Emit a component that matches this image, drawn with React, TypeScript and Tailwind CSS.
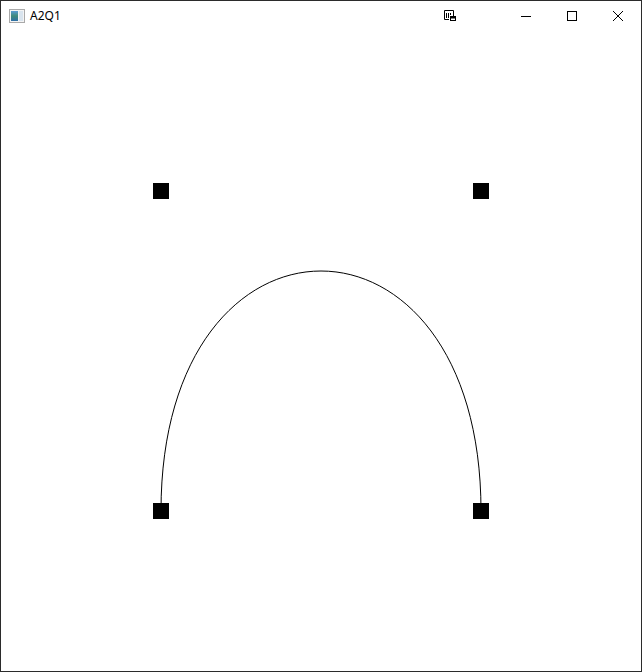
import React from "react";

function AppIcon() {
  return (
    <svg width="16" height="16" viewBox="0 0 16 16" className="shrink-0">
      <defs>
        <linearGradient id="g1" x1="0" y1="0" x2="0" y2="1">
          <stop offset="0" stopColor="#5a9bd4" />
          <stop offset="0.5" stopColor="#3f8a7a" />
          <stop offset="1" stopColor="#2f6fa8" />
        </linearGradient>
      </defs>
      <rect x="0.5" y="1.5" width="15" height="13" fill="#f4f4f4" stroke="#a9a9a9" />
      <rect x="2" y="3" width="7" height="10" fill="url(#g1)" />
      <rect x="10" y="3" width="4" height="10" fill="#d9e4ee" />
    </svg>
  );
}

function SnapIcon() {
  return (
    <svg width="12" height="12" viewBox="0 0 12 12" fill="none" stroke="#000" strokeWidth="1">
      <path d="M9.5 6V0.5H0.5V9.5H5" />
      <path d="M2.5 3V8M4.5 3V8M6.5 3V5" />
      <rect x="6.5" y="6.5" width="5" height="4" fill="#fff" />
      <rect x="7" y="7" width="4" height="1.5" fill="#000" stroke="none" />
    </svg>
  );
}

export default function App() {
  return (
    <div className="w-[642px] h-[672px] bg-white border border-[#2b2b2b] flex flex-col overflow-hidden">
      {/* barra de título */}
      <div className="h-[30px] flex items-center shrink-0">
        <div className="pl-[8px] flex items-center">
          <AppIcon />
        </div>
        <span
          className="ml-[5px] text-[12px] text-black"
          style={{ fontFamily: '"Noto Sans", "Open Sans", sans-serif' }}
        >
          A2Q1
        </span>
        <div className="flex-1" />
        <div className="w-[12px] h-[12px] mr-[47px] flex items-center">
          <SnapIcon />
        </div>
        <div className="w-[46px] h-[30px] flex items-center justify-center">
          <div className="w-[10px] h-px bg-black" />
        </div>
        <div className="w-[46px] h-[30px] flex items-center justify-center">
          <div className="w-[10px] h-[10px] border border-black" />
        </div>
        <div className="w-[46px] h-[30px] flex items-center justify-center">
          <svg width="10" height="10" viewBox="0 0 10 10" stroke="#000" strokeWidth="1">
            <path d="M0 0L10 10M10 0L0 10" />
          </svg>
        </div>
      </div>

      {/* área de desenho */}
      <div className="flex-1">
        <svg width="640" height="640" viewBox="1 31 640 640" className="block">
          <path d="M161 511 C161 191 481 191 481 511" fill="none" stroke="#000" strokeWidth="1" />
          <rect x="153" y="183" width="16" height="16" fill="#000" />
          <rect x="473" y="183" width="16" height="16" fill="#000" />
          <rect x="153" y="503" width="16" height="16" fill="#000" />
          <rect x="473" y="503" width="16" height="16" fill="#000" />
        </svg>
      </div>
    </div>
  );
}
